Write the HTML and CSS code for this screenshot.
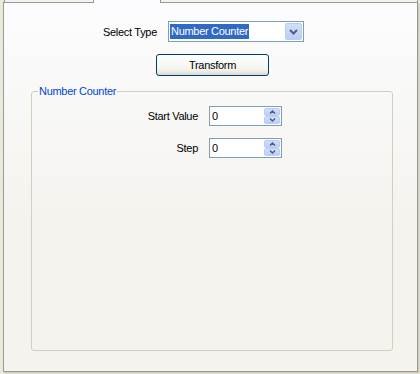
FILE: index.html
```html
<!DOCTYPE html>
<html>
<head>
<meta charset="utf-8">
<link rel="stylesheet" href="styles.css">
</head>
<body>
<div class="window">
  <div class="tabs">
    <div class="tab tab-left"></div>
    <div class="tab tab-active"></div>
    <div class="tab tab-right"></div>
  </div>
  <div class="panel">
    <div class="row row-type">
      <span class="label">Select Type</span>
      <div class="combo">
        <span class="sel">Number Counter</span>
        <span class="combo-btn">
          <svg width="9" height="6" viewBox="0 0 9 6"><polyline points="1,1 4.5,4.5 8,1" fill="none" stroke="#4d6185" stroke-width="2"/></svg>
        </span>
      </div>
    </div>
    <div class="row row-btn">
      <button class="btn">Transform</button>
    </div>
    <fieldset class="group">
      <legend>Number Counter</legend>
      <div class="fields">
        <label class="flabel">Start Value</label>
        <div class="spin">
          <span class="val">0</span>
          <span class="spin-btns">
            <span class="sb"><svg width="7" height="4" viewBox="0 0 7 4"><polyline points="1,3.5 3.5,1 6,3.5" fill="none" stroke="#4d6185" stroke-width="1.5"/></svg></span>
            <span class="sb"><svg width="7" height="4" viewBox="0 0 7 4"><polyline points="1,0.5 3.5,3 6,0.5" fill="none" stroke="#4d6185" stroke-width="1.5"/></svg></span>
          </span>
        </div>
        <label class="flabel">Step</label>
        <div class="spin">
          <span class="val">0</span>
          <span class="spin-btns">
            <span class="sb"><svg width="7" height="4" viewBox="0 0 7 4"><polyline points="1,3.5 3.5,1 6,3.5" fill="none" stroke="#4d6185" stroke-width="1.5"/></svg></span>
            <span class="sb"><svg width="7" height="4" viewBox="0 0 7 4"><polyline points="1,0.5 3.5,3 6,0.5" fill="none" stroke="#4d6185" stroke-width="1.5"/></svg></span>
          </span>
        </div>
      </div>
    </fieldset>
  </div>
</div>
</body>
</html>
```

FILE: styles.css
```css
html, body {
  margin: 0;
  padding: 0;
}
body {
  background: #ece9d8;
  font-family: "Liberation Sans", Arial, sans-serif;
  font-size: 11px;
  letter-spacing: -0.3px;
  color: #000;
}
.window {
  width: 420px;
  height: 374px;
  overflow: hidden;
}
.tabs {
  display: flex;
  height: 2px;
}
.tab {
  box-sizing: border-box;
  height: 2px;
}
.tab-left {
  margin-left: 4px;
  width: 90px;
  background: #f4f3ec;
  border-left: 1px solid #919b9c;
  border-right: 1px solid #919b9c;
}
.tab-active {
  width: 66px;
  height: 3px;
  background: #fcfcfe;
  position: relative;
  z-index: 1;
}
.tab-right {
  width: 258px;
  background: #f4f3ec;
  border-left: 1px solid #919b9c;
  border-right: 1px solid #919b9c;
}
.panel {
  box-sizing: border-box;
  margin-left: 3px;
  width: 415px;
  height: 370px;
  border: 1px solid #919b9c;
  background: linear-gradient(#fcfcfe, #f4f3ee 60%, #f4f3ee);
  box-shadow: 1px 1px 0 #d0cdbf, 2px 2px 0 #dedbcd;
  display: flex;
  flex-direction: column;
}
.row {
  display: flex;
  align-items: center;
}
.row-type {
  margin-top: 18px;
  padding-left: 99px;
}
.label {
  width: 65px;
}
.combo {
  box-sizing: border-box;
  width: 136px;
  height: 21px;
  border: 1px solid #7f9db9;
  background: #fff;
  display: flex;
  align-items: center;
  padding: 1px 1px 1px 1px;
}
.sel {
  background: #316ac5;
  color: #fff;
  padding: 0 1px;
  line-height: 15px;
}
.combo-btn {
  box-sizing: border-box;
  margin-left: auto;
  width: 17px;
  height: 17px;
  border: 1px solid #bccbf1;
  border-radius: 2px;
  background: linear-gradient(#d2def9, #bccdf7);
  display: flex;
  align-items: center;
  justify-content: center;
}
.combo-btn svg {
  display: block;
}
.row-btn {
  margin-top: 12px;
  padding-left: 152px;
}
.btn {
  box-sizing: border-box;
  width: 113px;
  height: 22px;
  margin: 0;
  padding: 0;
  border: 1px solid #003c74;
  border-radius: 3px;
  background: linear-gradient(#ffffff, #f3f3ef 75%, #dcd8cc);
  font-family: inherit;
  font-size: 11px;
  letter-spacing: -0.3px;
  color: #000;
}
.group {
  flex: 1;
  margin: 9px 24px 20px 27px;
  padding: 0 0 0 6px;
  border: 1px solid #d0d0bf;
  border-radius: 3px;
  min-width: 0;
}
.group legend {
  padding: 0 1px;
  margin: 0;
  line-height: 13px;
  color: #0046d5;
}
.fields {
  display: grid;
  grid-template-columns: 160px 73px;
  column-gap: 11px;
  row-gap: 12px;
  margin-top: 8px;
  align-items: center;
}
.flabel {
  text-align: right;
}
.spin {
  box-sizing: border-box;
  height: 20px;
  border: 1px solid #7f9db9;
  background: #fff;
  display: flex;
  align-items: center;
  padding: 1px 1px 1px 2px;
}
.val {
  line-height: 15px;
}
.spin-btns {
  margin-left: auto;
  width: 16px;
  height: 16px;
  display: flex;
  flex-direction: column;
}
.sb {
  box-sizing: border-box;
  flex: 1;
  border: 1px solid #bccbf1;
  border-radius: 2px;
  background: linear-gradient(#d2def9, #bccdf7);
  display: flex;
  align-items: center;
  justify-content: center;
}
.sb svg {
  display: block;
}
```
